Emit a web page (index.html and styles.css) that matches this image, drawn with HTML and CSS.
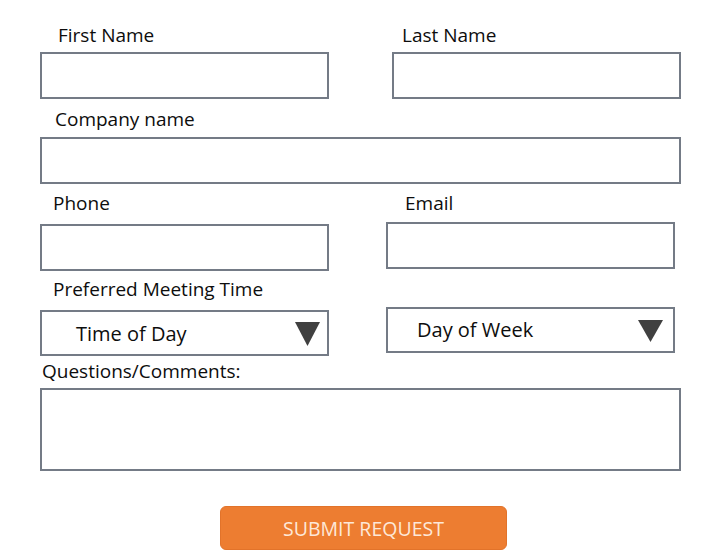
FILE: index.html
```html
<!DOCTYPE html>
<html>
<head>
<meta charset="utf-8">
<link rel="stylesheet" href="styles.css">
</head>
<body>
<form class="form">
  <div class="row row-names">
    <div class="field half">
      <label class="lbl lbl-first">First Name</label>
      <div class="box"></div>
    </div>
    <div class="field half f-last">
      <label class="lbl lbl-last">Last Name</label>
      <div class="box"></div>
    </div>
  </div>

  <div class="row row-company">
    <div class="field full">
      <label class="lbl lbl-company">Company name</label>
      <div class="box"></div>
    </div>
  </div>

  <div class="row row-contact">
    <div class="field half">
      <label class="lbl lbl-phone">Phone</label>
      <div class="box box-phone"></div>
    </div>
    <div class="field half f-email">
      <label class="lbl lbl-email">Email</label>
      <div class="box"></div>
    </div>
  </div>

  <div class="row row-meeting">
    <div class="field half">
      <label class="lbl lbl-pref">Preferred Meeting Time</label>
      <div class="box select sel-time">
        <span class="sel-text">Time of Day</span>
        <svg class="caret" width="25" height="24" viewBox="0 0 25 24"><polygon points="0,0 25,0 12.5,24" fill="#404040"/></svg>
      </div>
    </div>
    <div class="field half f-day">
      <div class="box select sel-day">
        <span class="sel-text">Day of Week</span>
        <svg class="caret" width="25" height="22" viewBox="0 0 25 22"><polygon points="0,0 25,0 12.5,22" fill="#404040"/></svg>
      </div>
    </div>
  </div>

  <div class="row row-questions">
    <div class="field full">
      <label class="lbl lbl-q">Questions/Comments:</label>
      <div class="box area"></div>
    </div>
  </div>

  <div class="actions">
    <button type="button" class="submit">SUBMIT REQUEST</button>
  </div>
</form>
</body>
</html>
```

FILE: styles.css
```css
* { box-sizing: border-box; }
html, body { margin: 0; padding: 0; background: #ffffff; }
body {
  width: 703px;
  height: 560px;
  overflow: hidden;
  font-family: "Open Sans", "Liberation Sans", sans-serif;
  color: #0d0d0d;
}
.form {
  padding: 24px 0 0 40px;
  width: 703px;
}
.row { display: flex; align-items: flex-start; }
.field { display: flex; flex-direction: column; }
.half { width: 289px; }
.full { width: 641px; }
.lbl {
  display: block;
  font-size: 19px;
  line-height: 22px;
  height: 22px;
}
.box {
  height: 47px;
  border: 2px solid #747b86;
  background: #fff;
}

/* row 1 */
.lbl-first { padding-left: 18px; margin-bottom: 6px; }
.f-last { margin-left: 63px; }
.lbl-last { padding-left: 10px; margin-bottom: 6px; }

/* row 2 */
.row-company { margin-top: 9px; }
.lbl-company { padding-left: 15px; margin-bottom: 7px; }

/* row 3 */
.row-contact { margin-top: 8px; }
.lbl-phone { padding-left: 13px; margin-bottom: 10px; }
.f-email { margin-left: 57px; }
.lbl-email { padding-left: 19px; margin-bottom: 8px; }

/* row 4 */
.row-meeting { margin-top: 7px; }
.lbl-pref { padding-left: 13px; margin-bottom: 10px; }
.f-day { margin-left: 57px; margin-top: 29px; }
.select {
  display: flex;
  align-items: center;
  justify-content: space-between;
  height: 46px;
}
.sel-text { font-size: 20px; line-height: 24px; }
.sel-time { padding: 0 7px 0 34px; }
.sel-time .sel-text { margin-top: 1px; }
.sel-time .caret { margin-top: 2px; }
.sel-day { padding: 0 10px 0 29px; }
.sel-day .caret { margin-top: 1px; }

/* row 5 */
.row-questions { margin-top: 4px; }
.lbl-q { padding-left: 2px; margin-bottom: 6px; }
.area { height: 83px; }

/* button */
.actions { padding-left: 180px; margin-top: 35px; }
.submit {
  width: 287px;
  height: 44px;
  border: 1px solid #e2732a;
  border-radius: 6px;
  background: #ed7d31;
  color: #fde8d8;
  font-family: "Open Sans", "Liberation Sans", sans-serif;
  font-size: 19.5px;
  padding: 0;
  cursor: pointer;
}
```
